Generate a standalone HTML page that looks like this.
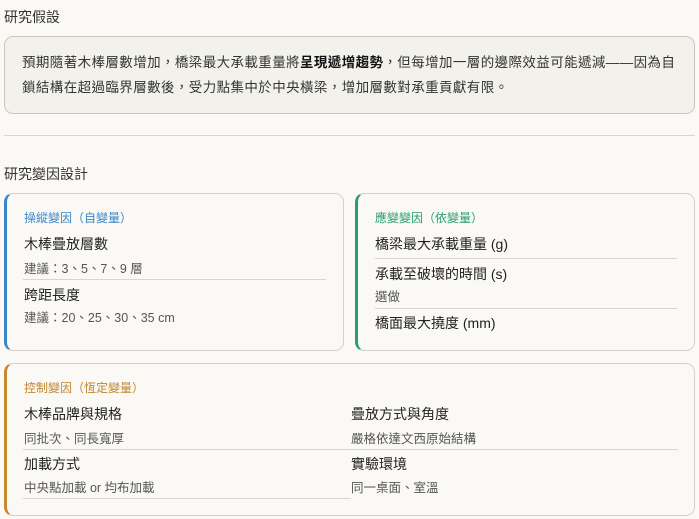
<!DOCTYPE html>
<html><head><meta charset="utf-8"><style>
*{margin:0;padding:0;box-sizing:border-box}
body{width:699px;height:519px;background:#faf9f5;font-family:"Liberation Sans","Noto Sans CJK TC",sans-serif;color:#222;position:relative;overflow:hidden}
.a{position:absolute;white-space:nowrap}
.h{font-size:14px;color:#333}
.box{position:absolute;border:1px solid #d4d2cb;border-radius:9px}
.t{font-size:14px;color:#222}
.s{font-size:12.5px;color:#555}
.l{font-size:12px}
.ln{position:absolute;height:1px;background:#d8d6cf}
</style></head><body>
<div class="a h" style="left:4px;top:7px">研究假設</div>
<div class="box" style="left:4px;top:36px;width:691px;height:78px;background:#f2f1eb;border-color:#c9c7c0"></div>
<div class="a" style="left:22px;top:50px;font-size:13.5px;letter-spacing:0.4px;color:#333;line-height:25px">預期隨著木棒層數增加，橋梁最大承載重量將<b style="color:#111">呈現遞增趨勢</b>，但每增加一層的邊際效益可能遞減——因為自<br>鎖結構在超過臨界層數後，受力點集中於中央橫梁，增加層數對承重貢獻有限。</div>
<div class="ln" style="left:4px;top:135px;width:691px"></div>
<div class="a h" style="left:4px;top:164px">研究變因設計</div>

<div class="box" style="left:4px;top:193px;width:340px;height:158px;border-left:3px solid #3a86c8"></div>
<div class="a l" style="left:24px;top:209px;color:#3a86c8">操縱變因（自變量）</div>
<div class="a t" style="left:24px;top:234px">木棒疊放層數</div>
<div class="a s" style="left:24px;top:258px">建議：3、5、7、9 層</div>
<div class="ln" style="left:23px;top:279px;width:303px"></div>
<div class="a t" style="left:24px;top:285px">跨距長度</div>
<div class="a s" style="left:24px;top:307px">建議：20、25、30、35 cm</div>

<div class="box" style="left:355px;top:193px;width:340px;height:158px;border-left:3px solid #2a9d6f"></div>
<div class="a l" style="left:375px;top:209px;color:#2a9d6f">應變變因（依變量）</div>
<div class="a t" style="left:375px;top:234px">橋梁最大承載重量 (g)</div>
<div class="ln" style="left:375px;top:258px;width:302px"></div>
<div class="a t" style="left:375px;top:264px">承載至破壞的時間 (s)</div>
<div class="a s" style="left:375px;top:286px">選做</div>
<div class="ln" style="left:375px;top:308px;width:302px"></div>
<div class="a t" style="left:375px;top:313px">橋面最大撓度 (mm)</div>

<div class="box" style="left:4px;top:363px;width:691px;height:153px;border-left:3px solid #c8892e"></div>
<div class="a l" style="left:24px;top:379px;color:#c0862e">控制變因（恆定變量）</div>
<div class="a t" style="left:24px;top:404px">木棒品牌與規格</div>
<div class="a s" style="left:24px;top:428px">同批次、同長寬厚</div>
<div class="a t" style="left:351px;top:404px">疊放方式與角度</div>
<div class="a s" style="left:351px;top:428px">嚴格依達文西原始結構</div>
<div class="ln" style="left:23px;top:449px;width:655px"></div>
<div class="a t" style="left:24px;top:454px">加載方式</div>
<div class="a s" style="left:24px;top:477px">中央點加載 or 均布加載</div>
<div class="a t" style="left:351px;top:454px">實驗環境</div>
<div class="a s" style="left:351px;top:477px">同一桌面、室溫</div>
<div class="ln" style="left:23px;top:498px;width:328px"></div>
</body></html>
